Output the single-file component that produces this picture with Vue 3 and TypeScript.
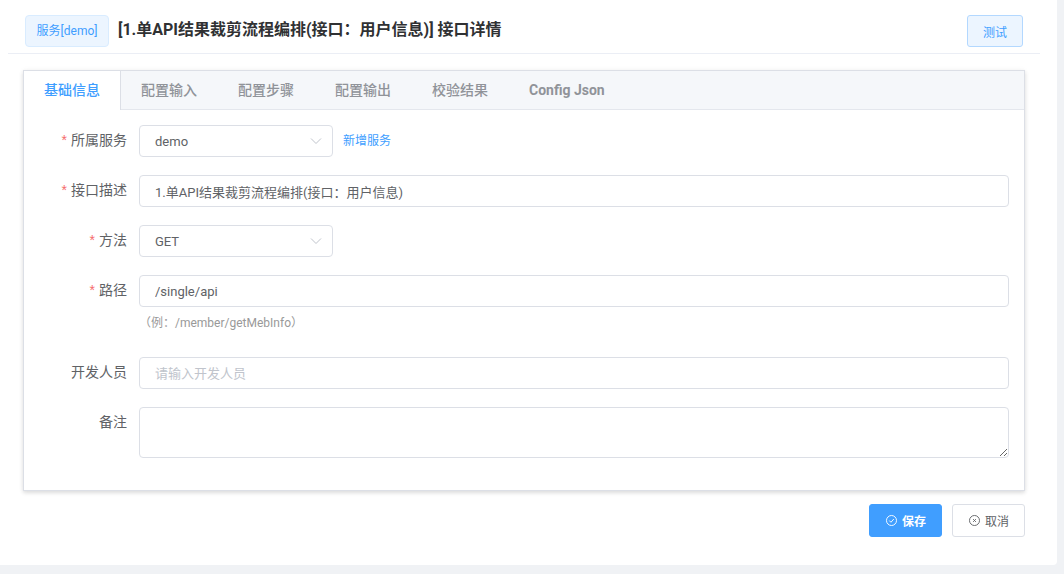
<script setup lang="ts">
import { ref } from 'vue'
const tabs = ['基础信息', '配置输入', '配置步骤', '配置输出', '校验结果', 'Config Json']
const active = ref(0)
</script>

<template>
  <div class="page">
    <header class="head">
      <span class="tag">服务[demo]</span>
      <h1 class="title">[1.单API结果裁剪流程编排(接口：用户信息)] 接口详情</h1>
      <button class="test" type="button">测试</button>
    </header>

    <section class="card">
      <nav class="tabs">
        <div
          v-for="(t, i) in tabs"
          :key="t"
          class="tab"
          :class="{ on: i === active }"
          @click="active = i"
        >{{ t }}</div>
      </nav>
      <form class="form" @submit.prevent>
        <div class="row">
          <label class="label"><i>*</i>所属服务</label>
          <div class="select"><span>demo</span><svg viewBox="0 0 12 8" class="arrow"><path d="M1 1.5 6 6.5 11 1.5" /></svg></div>
          <a class="link">新增服务</a>
        </div>
        <div class="row">
          <label class="label"><i>*</i>接口描述</label>
          <input class="input" value="1.单API结果裁剪流程编排(接口：用户信息)" />
        </div>
        <div class="row">
          <label class="label"><i>*</i>方法</label>
          <div class="select"><span>GET</span><svg viewBox="0 0 12 8" class="arrow"><path d="M1 1.5 6 6.5 11 1.5" /></svg></div>
        </div>
        <div class="row tight">
          <label class="label"><i>*</i>路径</label>
          <input class="input" value="/single/api" />
        </div>
        <div class="hint">（例：/member/getMebInfo）</div>
        <div class="row">
          <label class="label">开发人员</label>
          <input class="input" placeholder="请输入开发人员" />
        </div>
        <div class="row last">
          <label class="label">备注</label>
          <textarea class="area"></textarea>
        </div>
      </form>
    </section>

    <footer class="foot">
      <button class="btn primary" type="button">
        <svg viewBox="0 0 14 14" class="ico"><circle cx="7" cy="7" r="5.4" /><path d="M4.6 7.1 6.4 8.9 9.5 5.4" /></svg>
        <span>保存</span>
      </button>
      <button class="btn" type="button">
        <svg viewBox="0 0 14 14" class="ico"><circle cx="7" cy="7" r="5.4" /><path d="M5.5 5.5 8.5 8.5M8.5 5.5 5.5 8.5" /></svg>
        <span>取消</span>
      </button>
    </footer>
  </div>
</template>

<style>
html, body { margin: 0; background: #f0f2f5; }
</style>

<style scoped>
.page {
  box-sizing: border-box;
  width: 1057px;
  height: 565px;
  background: #fff;
  border-radius: 0 0 4px 0;
  padding: 0 32px 0 8px;
  font-family: Roboto, "Noto Sans CJK SC", sans-serif;
  font-size: 13px;
  color: #606266;
}
.head {
  display: flex;
  align-items: flex-start;
  height: 38px;
  margin-right: -15px;
  padding: 15px 17px 0;
  border-bottom: 1px solid #ebeef5;
}
.tag {
  box-sizing: border-box;
  width: 84px;
  height: 32px;
  line-height: 30px;
  text-align: center;
  font-size: 12px;
  color: #409eff;
  background: #ecf5ff;
  border: 1px solid #d9ecff;
  border-radius: 4px;
}
.title {
  margin: 0 0 0 9px;
  font-size: 16px;
  height: 30px;
  line-height: 30px;
  font-weight: 700;
  color: #303133;
  flex: 1;
  white-space: nowrap;
}
.test {
  box-sizing: border-box;
  width: 56px;
  height: 32px;
  padding: 0;
  font: inherit;
  font-size: 12px;
  color: #409eff;
  background: #ecf5ff;
  border: 1px solid #b3d8ff;
  border-radius: 3px;
}
.card {
  box-sizing: border-box;
  width: 1002px;
  height: 421px;
  margin: 16px 0 0 15px;
  background: #fff;
  border: 1px solid #dcdfe6;
  box-shadow: 0 2px 4px rgba(0, 0, 0, 0.12), 0 0 6px rgba(0, 0, 0, 0.04);
}
.tabs {
  box-sizing: border-box;
  display: flex;
  height: 39px;
  background: #f5f7fa;
  border-bottom: 1px solid #e4e7ed;
}
.tab {
  height: 38px;
  line-height: 39px;
  padding: 0 20px;
  font-size: 14px;
  font-weight: 500;
  color: #909399;
  border-right: 1px solid transparent;
  cursor: pointer;
}
.tab:last-child { font-weight: 700; }
.tab.on {
  height: 39px;
  color: #409eff;
  background: #fff;
  border-right-color: #dcdfe6;
}
.form { padding: 15px 15px 0; }
.row {
  display: flex;
  align-items: flex-start;
  margin-bottom: 18px;
}
.row.tight { margin-bottom: 0; }
.row.last { margin-bottom: 0; }
.label {
  box-sizing: border-box;
  flex: none;
  width: 100px;
  height: 32px;
  padding-right: 12px;
  line-height: 30px;
  text-align: right;
  font-size: 14px;
  color: #606266;
}
.label i {
  font-family: "Liberation Sans", sans-serif;
  font-style: normal;
  color: #f56c6c;
  margin-right: 4px;
}
.select, .input, .area {
  box-sizing: border-box;
  font-family: inherit;
  font-size: 13px;
  color: #606266;
  background: #fff;
  border: 1px solid #dcdfe6;
  border-radius: 4px;
  outline: none;
}
.select {
  display: flex;
  align-items: center;
  justify-content: space-between;
  width: 194px;
  height: 32px;
  padding: 0 10px 0 15px;
}
.arrow {
  width: 12px;
  height: 8px;
  fill: none;
  stroke: #c0c4cc;
  stroke-width: 1;
}
.link {
  margin-left: 10px;
  height: 32px;
  line-height: 32px;
  font-size: 12px;
  color: #409eff;
}
.input {
  flex: 1;
  min-width: 0;
  height: 32px;
  padding: 0 15px;
}
.input::placeholder { color: #c0c4cc; }
.area {
  flex: 1;
  min-width: 0;
  height: 51px;
  padding: 5px 15px;
  display: block;
  resize: vertical;
}
.hint {
  height: 32px;
  line-height: 33px;
  margin: 0 0 18px 100px;
  font-size: 12px;
  color: #999;
}
.foot {
  display: flex;
  justify-content: flex-end;
  gap: 10px;
  width: 1017px;
  margin-top: 13px;
}
.btn {
  box-sizing: border-box;
  display: flex;
  align-items: center;
  justify-content: center;
  gap: 4px;
  width: 73px;
  height: 33px;
  padding: 0;
  font: inherit;
  font-size: 12px;
  color: #606266;
  background: #fff;
  border: 1px solid #dcdfe6;
  border-radius: 3px;
}
.btn.primary {
  color: #fff;
  font-weight: 700;
  background: #409eff;
  border-color: #409eff;
}
.ico {
  width: 13px;
  height: 13px;
  fill: none;
  stroke: currentColor;
  stroke-width: 1;
}
</style>
